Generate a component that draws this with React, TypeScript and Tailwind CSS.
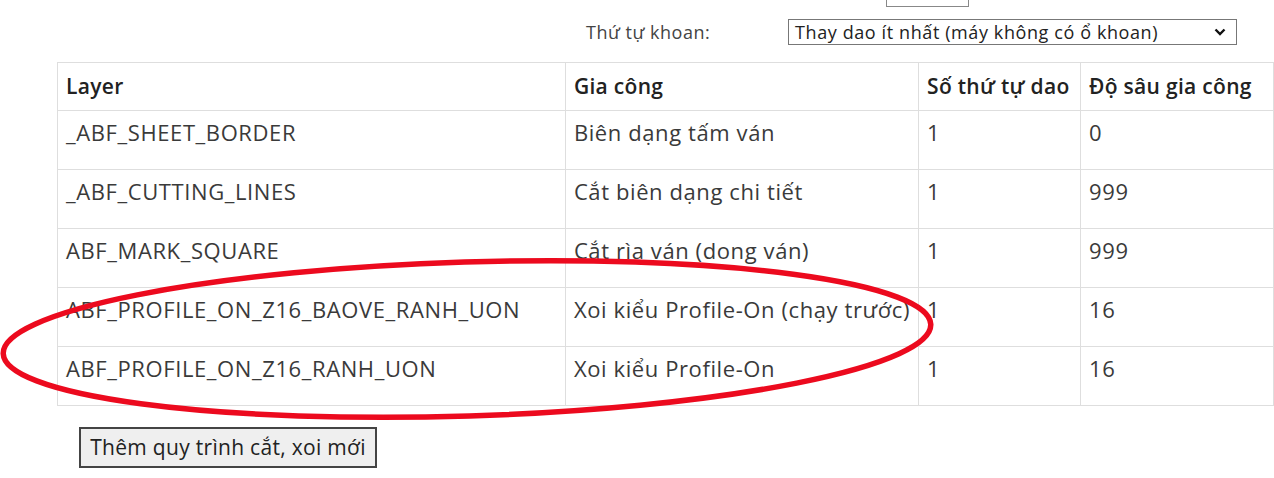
import React from "react";

const rows = [
  ["_ABF_SHEET_BORDER", "Biên dạng tấm ván", "1", "0"],
  ["_ABF_CUTTING_LINES", "Cắt biên dạng chi tiết", "1", "999"],
  ["ABF_MARK_SQUARE", "Cắt rìa ván (dong ván)", "1", "999"],
  ["ABF_PROFILE_ON_Z16_BAOVE_RANH_UON", "Xoi kiểu Profile-On (chạy trước)", "1", "16"],
  ["ABF_PROFILE_ON_Z16_RANH_UON", "Xoi kiểu Profile-On", "1", "16"],
];

export default function App() {
  return (
    <div
      className="relative w-[1274px] h-[478px] overflow-hidden bg-white text-[#333]"
      style={{ fontFamily: "'Open Sans', 'Noto Sans', sans-serif" }}
    >
      <div className="flex flex-col gap-[12px] pl-[586px] -mt-[19px]">
        <div className="flex items-center h-[26px]">
          <span className="w-[300px] text-[18px] text-[#444] leading-none translate-y-[-15px]">Mũi khoan ngang (mm):</span>
          <div className="w-[83px] h-[26px] border border-[#888] bg-white" />
        </div>
        <div className="flex items-center h-[26px]">
          <span className="w-[202px] text-[18px] tracking-[0.5px] text-[#444]">Thứ tự khoan:</span>
          <div className="w-[449px] h-[26px] border border-[#777] bg-white flex items-center justify-between pl-[6px] pr-[10px]">
            <span className="text-[18px] tracking-[0.6px] text-[#222] leading-none">Thay dao ít nhất (máy không có ổ khoan)</span>
            <svg width="12" height="8" viewBox="0 0 12 8">
              <path d="M1.5 1.5 L6 6 L10.5 1.5" stroke="#111" strokeWidth="2.4" fill="none" />
            </svg>
          </div>
        </div>
      </div>

      <table className="ml-[57px] mt-[17px] border-collapse">
        <thead>
          <tr className="h-[48px]">
            {["Layer", "Gia công", "Số thứ tự dao", "Độ sâu gia công"].map((h, i) => (
              <th
                key={h}
                className={
                  "border border-[#dedede] px-[8px] text-left align-middle text-[21px] tracking-[0.3px] font-semibold text-[#222] whitespace-nowrap " +
                  ["w-[508px]", "w-[352px]", "w-[162px]", "w-[193px]"][i]
                }
              >
                {h}
              </th>
            ))}
          </tr>
        </thead>
        <tbody>
          {rows.map((r) => (
            <tr key={r[0]} className="h-[59px]">
              {r.map((c, i) => (
                <td key={i} className="border border-[#dedede] px-[8px] pt-[8px] align-top text-[22px] tracking-[0.6px] text-[#3a3a3a] whitespace-nowrap leading-[26px]">
                  {c}
                </td>
              ))}
            </tr>
          ))}
        </tbody>
      </table>

      <div className="ml-[79px] mt-[21px]">
        <button className="h-[41px] w-[298px] border-2 border-[#444] bg-[#efefef] text-[21px] tracking-[0.3px] text-[#222]">
          Thêm quy trình cắt, xoi mới
        </button>
      </div>

      <svg className="pointer-events-none absolute left-0 top-0" width="1274" height="478">
        <ellipse
          cx="467"
          cy="339"
          rx="464"
          ry="77"
          transform="rotate(-1.8 467 339)"
          fill="none"
          stroke="#ec0a1e"
          strokeWidth="5.5"
        />
      </svg>
    </div>
  );
}
